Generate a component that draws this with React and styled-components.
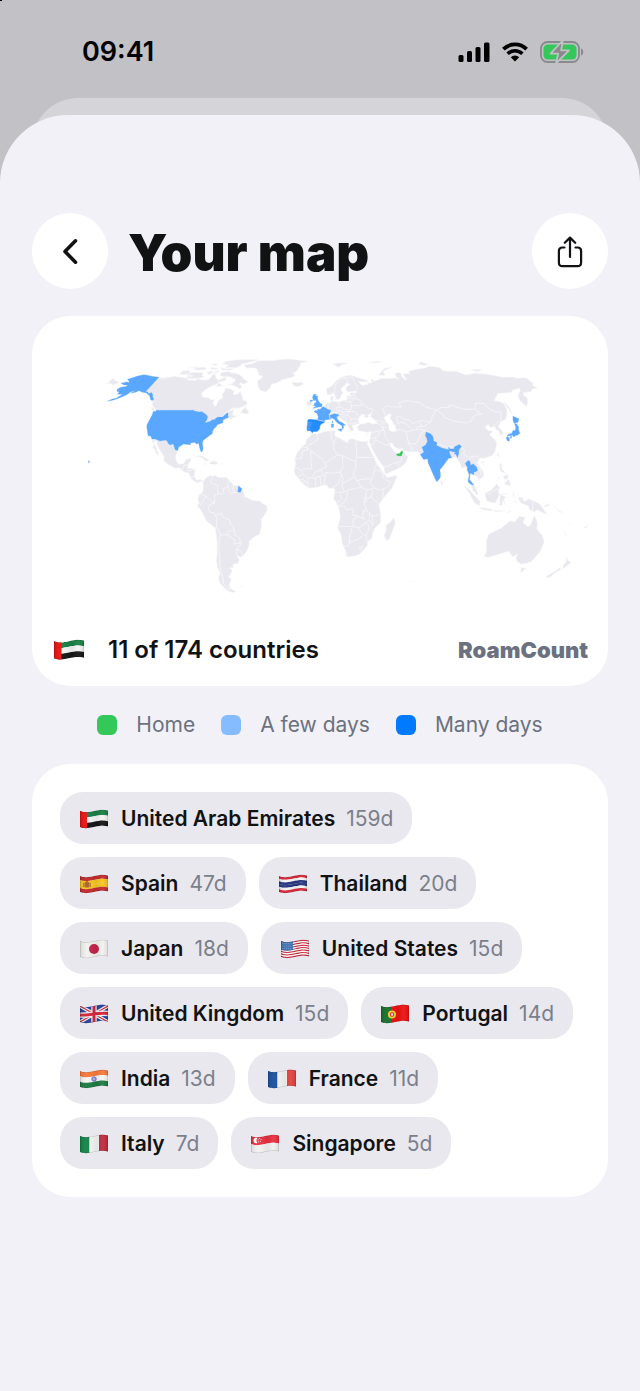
import React, { useId } from "react";

import styled, { createGlobalStyle } from "styled-components";

const GlobalStyle = createGlobalStyle`
  * {
    box-sizing: border-box;
  }

  body {
    margin: 0;
    background: #f2f1f7;
    font-family: Inter, "Liberation Sans", sans-serif;
    color: #111214;
  }
`;

const Screen = styled.div`
  min-height: 100vh;
  display: flex;
  flex-direction: column;
  background: linear-gradient(#000, #000) 0 0 / 2px 1px no-repeat, #c2c1c6;
`;

const StatusBar = styled.div`
  display: flex;
  align-items: center;
  justify-content: space-between;
  height: 98px;
  padding: 6px 56px 0 82px;
`;

const Time = styled.time`
  font-size: 27px;
  line-height: 32px;
  font-weight: 600;
  color: #000;
`;

const StatusIcons = styled.div`
  display: flex;
  align-items: center;
  gap: 12px;

  svg {
    display: block;
  }
`;

const BackSheet = styled.div`
  height: 90px;
  margin: 0 32px -73px;
  border-radius: 46px 46px 0 0;
  background: #d5d4d9;
`;

const Sheet = styled.main`
  flex: 1;
  padding: 98px 32px 40px;
  border-radius: 68px 68px 0 0;
  background: #f2f1f7;
`;

const Header = styled.header`
  display: flex;
  align-items: center;
  gap: 20px;
  margin-bottom: 27px;
`;

const Title = styled.h1`
  flex: 1;
  margin: 0;
  padding-top: 4px;
  font-size: 51px;
  line-height: 64px;
  font-weight: 900;
`;

const RoundButton = styled.button`
  width: 76px;
  height: 76px;
  padding: 0;
  border: 0;
  border-radius: 50%;
  background: #fff;
  color: #111214;

  svg {
    display: block;
  }
`;

const Card = styled.section`
  border-radius: 38px;
  background: #fff;
`;

const MapSvg = styled.svg`
  display: block;
  width: 100%;
  height: auto;
`;

const MapFooter = styled.div`
  display: flex;
  align-items: center;
  padding: 15px 20px 21px 22px;
`;

const Count = styled.strong`
  flex: 1;
  margin-left: 24px;
  font-size: 24px;
  line-height: 30px;
  font-weight: 600;
`;

const Brand = styled.span`
  font-size: 22px;
  line-height: 30px;
  font-weight: 900;
  color: #6b7180;
`;

const Legend = styled.ul`
  display: flex;
  justify-content: center;
  gap: 26px;
  margin: 24px 0;
  padding: 0;
  list-style: none;
`;

const LegendItem = styled.li`
  display: flex;
  align-items: center;
  gap: 19px;
  font-size: 21px;
  line-height: 30px;
  color: #6b7180;

  &::before {
    content: "";
    width: 20px;
    height: 20px;
    border-radius: 6px;
    background: ${({ $color }) => $color};
  }
`;

const Chips = styled.ul`
  display: flex;
  flex-wrap: wrap;
  gap: 13px;
  margin: 0;
  padding: 28px;
  list-style: none;
`;

const Chip = styled.li`
  display: flex;
  align-items: center;
  height: 52px;
  padding: 2px 19px 0 20px;
  border-radius: 23px;
  background: #e9e8ee;
  font-size: 21px;
  line-height: 30px;
`;

const ChipName = styled.span`
  margin: 0 11px 0 13px;
  font-weight: 600;
`;

const ChipDays = styled.span`
  color: #7b7f8c;
`;

const FlagSvg = styled.svg`
  display: block;
  flex: none;
`;

/* ---------- world map ---------- */

// Natural Earth projection
const RADIUS = 99.5;
const project = (lon, lat) => {
  const l = (lon * Math.PI) / 180;
  const p = (lat * Math.PI) / 180;
  const p2 = p * p;
  const p4 = p2 * p2;
  const x =
    l *
    (0.8707 -
      0.131979 * p2 +
      p4 * (-0.013791 + p4 * (0.003971 * p2 - 0.001529 * p4)));
  const y =
    p *
    (1.007226 +
      p2 * (0.015085 + p4 * (-0.044475 + 0.028874 * p2 - 0.005916 * p4)));
  return [(288 + x * RADIUS).toFixed(1), (180 - y * RADIUS).toFixed(1)];
};

const toLine = (points) =>
  "M" +
  points
    .trim()
    .split(/\s+/)
    .map((pair) => project(...pair.split(",").map(Number)).join(" "))
    .join("L");

const toShape = (list) => list.map((points) => toLine(points) + "Z").join("");

const LAND = [
  // Canada
  "-141,69.6 -137,69 -135,69.4 -131,69.9 -128,70.4 -124.5,70 -120,69.4 -115,68.8 -113.5,67.7 -109,67.9 -108,67.2 -106,68.7 -102,67.8 -98,67.7 -96,68.3 -95.5,69.8 -96,71.5 -94,72 -92,70.5 -90.5,69 -88.5,68.5 -87.5,67.3 -85.5,69 -82,69.5 -81.3,68.3 -82,67.2 -86,66.3 -87.3,64.8 -90.5,63.5 -93,62 -94.7,60 -94.8,59 -92.7,57 -88,56.5 -85,55.3 -82.3,55.1 -82.2,53 -80,51.3 -79,52 -79.3,54.5 -76.6,56.6 -78.5,58.8 -77.3,60 -78,62.4 -74,62.3 -71.5,61.2 -69.6,61 -69.7,58.9 -67.8,58.3 -66,58.8 -64.5,60.3 -61.5,57.2 -60,55 -57.3,54.6 -55.7,52.6 -58.5,51.2 -61,50.2 -66.5,50.2 -69,48.4 -71,46.9 -68.5,48.5 -65,49.2 -64.3,48.5 -65.2,47.2 -64.5,46.2 -61,45.5 -63.5,44.6 -65.8,43.5 -66,44.5 -67,45 -67.8,45.8 -68.3,47.3 -69.2,47.4 -70.3,46.2 -71.5,45 -75,45 -76.4,44.1 -76.8,43.6 -79.1,43.4 -79,42.7 -82.5,41.7 -83.1,42.1 -82.4,43 -82.5,45.3 -83.5,46 -84.3,46.4 -84.8,46.8 -88.4,48.3 -89.6,48 -92,48.3 -94.6,48.7 -95.2,49.4 -95.2,49 -123,49 -125.5,50.5 -127.5,51.5 -129,53 -130.2,54.8 -130,55.9 -131.8,56.6 -133.5,58.4 -135.5,59.7 -137.5,58.9 -139,60 -141,60.3",
  "-123.5,48.4 -125.5,48.8 -128.2,50.7 -125.5,50.2",
  "-59.2,47.7 -56,46.9 -53,46.8 -53.5,48.5 -55.8,49.8 -56.5,51.4 -58,49.5",
  "-66,62 -68.5,63 -72,64 -74.5,64.6 -78,64.5 -74,65.5 -73,67 -73,68.2 -79,70 -84.5,70 -88.5,70.8 -89.5,72.5 -86,73.7 -82,73.7 -80.5,72.6 -77,72.7 -72,71.5 -68.5,70.2 -67,69 -62,67 -61.5,66.5 -64,65 -67.5,66 -68,65 -65,64 -65,62.7",
  "-105,69 -113.5,68.6 -116.5,69.3 -117,70.2 -112,70.5 -118,71 -119,71.7 -115,73.2 -108,73 -105,72.5 -104.5,71 -101.5,69.7",
  "-125.5,72 -123,71.3 -120,71.6 -117,73 -121,74.5 -125,73.9",
  "-99,71.5 -102,72.5 -100,73.8 -97,73.8 -97,72.5",
  "-93,72.8 -95.5,72.3 -95.5,74 -91,74",
  "-80,74.6 -90,74.6 -93,76.5 -89.5,75.8 -80,75.7",
  "-105.5,75.2 -112,74.5 -117.5,75.2 -115.5,76.4 -109,76.8 -106,76",
  "-123,76 -117,77.4 -116,76.6",
  "-94,74.8 -98,75 -102.5,75.6 -101.5,76.6 -95,75.8",
  "-78,76.3 -89,76.4 -87.5,78 -92,79 -95,81 -91,81.9 -83,82.8 -70,83.1 -62,82.5 -68,81 -72,79.8 -76,79 -75,78.4",
  "-88,78.3 -94,79 -94,80.8 -90,81.2 -87,79.8",
  "-98,78 -104,78.5 -104,79.3 -99,79",
  "-80.5,63.8 -87,63.6 -85.5,65.8 -84,65.2",
  // Greenland, Iceland
  "-73,78.3 -68.5,76 -62,76.2 -58.5,75.3 -55.5,72.5 -54.5,71 -51,70.5 -51,69 -53.5,67.5 -52.5,65 -51,63 -48.5,61 -43.5,60 -41,62.7 -40.5,65 -36,66 -32,68 -25,69.5 -22,70.5 -24.5,72.5 -21,74 -20,76.3 -18.5,78 -19,80 -12,81.5 -20,82.2 -31.5,83.5 -40,83.2 -46,82 -54,82.2 -61,81.8 -65,80.5 -65.5,79.5",
  "-24,65.5 -22.5,66.4 -20,66 -16,66.5 -14,65.2 -15,64.3 -18.7,63.4 -22.6,63.9 -22,65",
  // Mexico and Central America
  "-117.1,32.5 -114.8,32.5 -111,31.3 -108.2,31.8 -106.5,31.7 -104.5,29.6 -103,29 -101.4,29.8 -100.3,28.3 -99.1,26.4 -97.2,25.9 -97.8,22.5 -97,20.3 -95.8,18.8 -94.4,18.1 -91.5,18.7 -90.4,20.9 -87.1,21.5 -87.5,19.5 -88.3,18.3 -88.9,15.9 -86,15.9 -83.2,15 -83.6,12.5 -83.5,10.8 -82,9 -79.8,9.5 -77.3,8.6 -77.5,7.5 -78.3,8.3 -80.3,8.3 -80.4,7.3 -82.9,8.2 -85.7,10 -87.6,13 -91.5,14 -94,16.1 -96.5,15.7 -102,18 -105.5,20.2 -105.6,22.5 -109,25.6 -112.2,29 -113.1,31.2 -114.8,31.8 -114.6,30 -112,27 -110,24.2 -109.5,23 -112,24.7 -112.3,26 -115,27.8 -114.3,29 -116.2,31",
  "-84.9,21.9 -82.5,23.1 -80,23 -77,21.5 -74.3,20.2 -77.7,19.9 -78.5,21.2 -82,22.5",
  "-74.4,18.5 -73,19.9 -70,19.8 -68.4,18.6 -71.5,17.8",
  "-78.3,18.4 -76.3,18.2 -77,17.8",
  "-67.2,18.4 -65.7,18.4 -66,17.9 -67.2,17.9",
  // South America
  "-77.3,8.6 -75.5,10.7 -72,12 -71.5,10.8 -70,12 -68,10.7 -62,10.7 -60,8.6 -57,6 -54,5.8 -51.6,4.2 -50,1 -50,-0.5 -48,-1 -44.5,-2.5 -40,-2.9 -37,-4.9 -35.2,-5.5 -34.9,-8 -37,-11 -39,-13 -39.2,-17.5 -41,-22 -44.5,-23.2 -48.5,-25.8 -48.7,-28.3 -50.5,-31 -53.5,-33.9 -56,-34.8 -58.3,-34 -57,-36 -58,-38.2 -62,-38.9 -62.3,-40.7 -65,-41 -63.8,-42.6 -65.3,-44.5 -67.5,-46.2 -65.8,-47.5 -69,-50.8 -68.3,-52.3 -70.8,-53.8 -73,-53 -75.5,-50 -75.5,-47 -73,-44 -73.7,-40 -73.5,-37 -71.5,-32 -70.3,-25 -70.3,-18.4 -76,-14 -79,-8 -81.2,-6 -80.3,-3.5 -81,-2.2 -80,0.5 -77.5,2.5 -77.2,4.5 -77.5,7.5",
  "-68.6,-52.7 -67.5,-54 -65.2,-54.7 -68,-55.6 -71,-54.8 -74.5,-52.9 -70.5,-53.7",
  "-61,-51.9 -58,-51.5 -58.5,-52.1",
  "68.7,-48.8 70.5,-49.3 69,-49.6",
  // Africa
  "-5.9,35.8 -2,35.2 3,36.8 10,37.3 11,37 10.3,34.3 15,32.3 19,30.3 20,32.5 23,32.6 29,31 34,31.2 32.5,30 34,27 35.6,24 37.2,20.5 38.5,18 43,12.5 44.5,10.5 51,11.8 51,10.4 47.8,4.5 42,-1.2 39,-5 40.5,-10.5 40.6,-15.2 36.5,-18.8 35.5,-22 35.5,-24 32.7,-26 32.4,-28.5 28,-33 25,-34 20,-34.8 18.3,-34 18.2,-32 15,-26.5 14.4,-22.5 11.8,-18 13.5,-12 12.2,-6 9,-1.5 9.5,0.8 9.7,4 8.5,4.6 6,4.3 4.3,6.3 1,5.9 -2,4.8 -7.6,4.4 -12,7.5 -15,11 -16.8,12.4 -17.4,14.7 -16.3,19 -17,21 -16,24 -13,27.7 -9.8,29.8 -9.7,32 -6.8,34",
  "49.3,-12 50.4,-15.7 47.2,-24.8 45.2,-25.5 43.4,-22.5 44.4,-20 44.3,-16.5 47,-15.2",
  // Eurasia
  "-9,37 -9.4,38.8 -8.9,41 -9,43 -8,43.7 -1.9,43.4 -1.2,45 -2.2,47.2 -4.6,48.2 -3,48.8 -1.6,48.7 -1.8,49.7 0,49.5 1.6,50.6 3.4,51.4 4.7,53 7,53.5 8.6,53.8 8.2,55.6 8.2,57 10.5,57.7 10.5,56.4 10,55 11,54.1 14,54 18.5,54.8 21,55.3 21.2,57 21.6,57.6 22.7,57.7 24.2,57.1 23.6,58.8 25,59.6 28,59.6 30,60 28,60.5 23,59.9 21.4,61 21.5,63 25.3,65 22.2,65.8 21,64.5 17.5,62.3 17.2,60.7 18.8,60 16.5,57.5 16,56.2 14.3,55.5 12.9,55.5 11.2,58.9 10.4,59.4 8,58.1 5.7,58.6 5,61.9 10,64 14,67.5 19,69.8 25.8,71 31,70.3 31,69.7 33,69.4 41,67.5 40.5,66.5 35,66.5 33,66.7 34.8,64.5 37,64 37.2,65 40,64.7 40,65.8 44,66 44,68.4 46,68 46,66.9 53,68.8 61,69 65,69.2 67,68.8 68.5,68.3 66.8,70 67,72 70,73 72.6,72.8 72,70 73.5,68 75,68 74,70.5 75,72.2 80.5,72.3 80.5,73.6 87,75 98,76.2 104,77.7 112,76.5 113,74 124,73.8 129,71.5 133,71.7 140,72.5 150,71.6 160,69.7 170,69.8 171,69 178,69.3 180,69 180,65 177.5,64.5 179,62.5 174,61.8 170,60 164,59.8 162,58 163,56.2 160,53.2 156.7,51 155.7,55 157,57.8 163,61 164,62.5 160,61.7 156.5,61.2 154.5,59.6 148,59.4 142.5,59 135.3,54.7 139.5,54.2 141.4,53 140.5,49 138,46 135,43.5 130.8,42.3 129.7,41 127.5,39.7 129.3,37 129,35.2 126.5,34.5 126.3,37 125,38 125.2,39.5 121.5,39 121,40.8 118,39.2 119,37.3 122.4,37 119.2,34.9 121.9,31.8 122,29.8 119.5,25.5 116.5,23 111,21.4 108,21.6 105.8,19 109.2,13.5 109,11.5 105,8.7 105,10.3 102.6,12.1 100.9,12.7 100.5,13.5 99.9,12 99.3,9.4 100.3,8.2 103.4,4.5 104.2,1.4 103.4,1.3 101,3.2 100.3,6 98.3,8 98.7,12 97.6,16.5 95,15.8 94,18.9 91.8,22.4 89,21.8 87,21.5 85,19.7 82,16.7 80.1,15 80.2,13 79.9,10.4 77.5,8.1 76,11 74.5,14.5 72.8,19 72.7,21.3 70,20.9 69,22.3 68.2,23.7 66.5,25.4 61.5,25.1 57.3,25.7 56.5,27 54,26.6 51,28 50,30 48,30 48.5,28.2 50.2,26.5 50.8,24.9 51.5,25.9 51.6,24.2 54,24.1 56.3,26.2 56.6,24.5 59.8,22.5 57.7,19 55,17 52,15.6 45,12.8 43.4,12.7 42.6,16.5 39,21 35,28 34.9,29.5 34.2,31.2 36,35.5 36,36.8 32.5,36.1 30.6,36.8 27.5,37 26.3,39.3 29,41 31.5,41.2 35,42 38,41 41.5,41.5 39,44 37,45.3 38.5,47 35,46.2 36,45.2 33.5,44.5 32.6,45.4 33.5,46.1 31,46.6 28.8,45 27.8,43.2 28.5,41.3 26,40.8 24,40.5 22.9,40.3 23.5,39 24,37.8 22.8,36.5 21.3,37.5 19.4,40.5 19.5,41.8 15.3,44.2 13.7,45.4 12.3,45.3 12.5,44 14,42.5 16,41.9 18.5,40.2 17,40.5 16.6,39.8 17,39 16,38 15.7,40 12.3,41.8 10.2,43.9 8.7,44.4 7.4,43.7 4,43.5 3.1,43 3.2,41.9 0.8,41 -0.3,39.4 0,38.7 -0.8,37.7 -2,36.8 -4.5,36.7 -5.6,36 -6.5,37",
  "-180,69 -175,67.3 -170,66 -173,64.3 -178,65.8 -180,65",
  "-6.1,52.2 -6.2,54 -8,54.4 -10,54.2 -10,51.7",
  "11,55.3 12.5,56 12,55",
  "52,71 55,73 60,76 68,76.8 58,74 57.5,70.7",
  "12,79.5 17,76.7 21,78.5 27,80 20,80",
  "95,79 100,81 105,79 100,78",
  "138,75 150,75.2 143,73.5",
  "48,80.5 58,81.6 62,80.8 54,80.2",
  "142,46 143.5,49.5 143,54.2 142,53 142,49",
  "32.4,35 34.4,35.6 33.2,34.6",
  "23.6,35.4 26.2,35.2 24,35",
  "120.2,23 121.5,25.2 121.8,24.8 121,22",
  "108.7,19.3 110.8,20 109.6,18.3",
  "79.9,9.5 81.7,7 80.2,6.1",
  "120.3,16 120.7,18.5 122.2,18.3 121.7,15.5 124,12.7 120.6,14",
  "122,11.5 125,12.3 125.2,10.3 122.8,9.2",
  "122,7 125.5,9.7 126.3,7 125.4,5.7",
  "117.3,8.5 119.4,11.3 119,10.2",
  // Indonesia, New Guinea
  "109,1.5 111.5,2.5 113,3.2 115.5,5.5 117,7 119,5.2 117.8,2 119,1 116,-4 114.5,-4 110.2,-2.8",
  "95.3,5.6 98,4.3 100.5,2 103.5,-0.8 106,-3.2 105.8,-5.8 102.2,-4 98.7,1.7",
  "105.2,-6.6 108.5,-6.7 114.4,-7.7 114,-8.6 108,-7.8",
  "119,-5.5 119,0 120.5,1.2 125,1.6 120.2,0.5 123.3,-0.9 121.5,-1.9 123,-5 121,-2.8 120.4,-5.6",
  "115,-8.2 119,-8.3 122.8,-8.3 119,-9 116,-9",
  "123.6,-10.3 127,-8.4 125,-8.8",
  "127.5,2 128.6,1 128,-0.8",
  "128,-3.2 130.7,-3.2 130,-3.7",
  "131,-0.8 134,-0.9 135,-3.3 138,-1.8 141,-2.6 145.5,-4.5 147.5,-6.5 150.7,-10.5 147,-9.3 144,-7.7 142.5,-9.2 139,-8 138,-5.8 133,-4 132,-2.8",
  "148.5,-5.8 152,-4.2 151.5,-5.6 149.5,-6.3",
  "155,-5.5 157,-7.5 160.5,-9 161,-9.8 158,-8.5",
  "164,-20.2 167,-22.3 166.3,-22.3",
  "166.8,-15 167.5,-16.4 166.8,-16",
  "177.3,-18 179.8,-16.4 178.4,-18.5",
  // Australia, New Zealand
  "114,-22 113.5,-26 115.7,-31.8 115,-34.3 118,-35 124,-33.5 131,-31.5 135.5,-34.8 137.8,-33 137.5,-35 140,-37.5 143.5,-38.8 147,-38.5 150,-37.3 153,-31.5 153.2,-26 150.5,-22.5 146,-19 145.3,-15 142.5,-10.8 141,-16.5 139.5,-17.5 135.7,-15 136.8,-12.2 132.5,-11.4 130,-14.8 127,-14 122.3,-18",
  "144.8,-40.8 148.2,-41 147,-43.5 146,-43.4",
  "172.8,-34.5 175.5,-36.8 178.4,-37.8 176.9,-39.8 175.2,-41.6 173.8,-39.3 174.6,-37.5",
  "172.8,-40.6 174.2,-41.8 171,-44.5 170.7,-45.8 168.5,-46.6 166.6,-45.9 171,-42.7",
];

const CASPIAN =
  "47,44.7 51,46.9 53,46.5 51,44.5 52.8,42 52.5,41.5 54,40 54,37 51,36.8 49,37.6 49.5,40.3 47.8,42.8";

const BORDERS = [
  // South America
  "-71.3,11.8 -72.5,9 -72,7.2 -67.5,6.2 -67.8,3 -67,1.2 -69.5,0.5 -69.5,-1 -70,-4.2",
  "-78.8,1.4 -75.4,-0.1 -72.5,-2.4 -70,-4.2 -73.2,-5 -74,-7.5 -72.5,-9.5 -70.6,-9.5 -69.5,-11 -68.8,-13 -69.3,-15.5 -69.5,-17.5 -70.3,-18.4",
  "-80.3,-3.5 -79,-5 -75.4,-0.1",
  "-69.5,-11 -65.3,-9.8 -65,-12 -60.2,-13.8 -60,-16.3 -58,-17.5 -57.8,-20 -59,-19.3 -62,-20.5 -62.7,-22.2 -66,-22 -67.5,-22.8",
  "-69.5,-17.5 -68,-20 -67.5,-22.8 -68.5,-25 -70,-30 -70,-34 -71.3,-38 -72,-43 -72,-48 -73,-50 -72,-52 -68.4,-52.3",
  "-62.7,-22.2 -58,-25 -58.6,-27.3 -54.7,-27 -54.3,-24.1 -57.8,-22 -57.8,-20",
  "-54.3,-25.6 -53.7,-27 -57.6,-30.2 -58.3,-34",
  "-57.6,-30.2 -55,-31.3 -53.5,-33.7",
  "-67,1.2 -65,1 -63.5,2.3 -64.5,4 -60.8,5.2 -61.3,6 -60,8.3",
  "-60.8,5.2 -59.8,3 -59,1.3 -56.5,1.9 -54.5,2.4",
  "-57,6 -58,4 -56.5,1.9",
  // Central America
  "-92.2,14.5 -91,17.8 -89,17.8 -88.3,18.3",
  "-89.3,14.4 -83.2,15",
  "-85.7,11 -83.7,11",
  // Africa
  "-2,35.2 -1.3,32.3 -5,30 -8.7,28.8 -8.7,27.4 -4.8,25 1.2,21.2 3.2,19 4.2,19.1 12,23.5 15,23 24,19.5",
  "-13,27.7 -8.7,27.7 -8.7,26 -12,26 -12,23.4 -13,21.3 -17,21.3",
  "-4.8,25 -6.5,25 -5.5,15.5 -11.5,15.5",
  "12,23.5 9.5,26.5 9.5,30.3 11.5,33.1",
  "8.3,36.9 7.6,33.5 9.5,30.3",
  "25,31.6 25,22 37,22",
  "25,22 24,20 24,15.7 22,13 22.9,11 27.4,5.1",
  "15,23 15.5,17 13.5,13.7 7,13 4,13.5 3.6,11.7 2.7,6.4",
  "3.2,19 4.2,16.5 0.3,15 -3,13.7 -5.5,10.5 -8,10.2 -8.3,7.5 -7.6,4.4",
  "0.3,15 2.2,12 3.6,11.7",
  "-5.5,10.5 -2.8,9.7 -2.8,11 0,11 2.2,12",
  "-2.8,9.7 -3,5.1",
  "0,11 0.5,7 1.2,6",
  "-8.3,7.5 -10.3,8.5 -11.5,7",
  "-10.3,8.5 -11,10 -13.2,9",
  "-8,10.2 -11.4,12.4 -15,10.9",
  "-11.4,12.4 -12.2,14.8 -16.4,16.2",
  "13.5,13.7 14,11 11.5,6.5 8.5,4.7",
  "14.1,13 15.5,10 14.5,6 16.1,2.2 9.7,2.2",
  "15.5,7.5 18.8,8.9 22.9,11",
  "12.2,-5.8 16,-3.5 17.7,-0.6 18.6,3.5 22.5,4.1 27.4,5.1 31,3.5 34,4.2 36,4.5 39.5,3.5 42,4.2 41.5,-1.6",
  "18.6,3.5 16.1,2.2",
  "13.2,2.2 14.3,-1.8 11.2,-3.9",
  "24,8.7 28,9.5 33,10 34,8.5 33,7.8 36,4.5",
  "34,8.5 36.2,14.3 37,17 38.5,18",
  "36.5,14.3 40,14.5 42.4,12.5 41.8,11 43.2,9.5 47,8 45,5 42,4.2",
  "34,4.2 35,1.9 33.9,0 34,-1 39.2,-4.7",
  "31,3.5 29.6,-1.3 29.2,-3.3 30.8,-8.3 33,-9.5 34.5,-11.5 40.5,-10.5",
  "34,-1 30.5,-1.1 29.6,-1.3",
  "30.5,-1.1 30.8,-2.4 29.4,-4.4",
  "34.5,-11.5 35.8,-15 35.2,-17 34.2,-14.5 33,-14 32.8,-12.5 33.2,-9.6",
  "33,-14 30.3,-15.2 28.9,-16 27,-17.9 25.2,-17.8 23.4,-17.6 11.8,-17.3",
  "30.8,-8.3 28.6,-8.5 28.5,-12 29.8,-13.4 24,-11 24,-13 22,-13 22,-16.2 23.4,-17.6",
  "12.3,-6 16.5,-5.9 17.5,-8.1 21.8,-7.3 22,-11 24,-11",
  "30.3,-15.6 32.9,-16.7 32.8,-19.5 31.3,-22.3 32,-26 32.8,-26.8",
  "25.2,-17.8 27.7,-20.5 29.4,-22.1 31.3,-22.3",
  "29.4,-22.1 26.5,-24.5 23,-25.4 20.7,-26.8 20,-24.8 20,-22 21,-22 21,-18.3",
  "20,-24.8 20,-28.4 16.5,-28.6",
  "27,-29.6 28.6,-28.7 29.3,-29.7 28,-30.6 27,-29.6",
  // Asia
  "48,46 47,50 51,51.5 55,51 61.5,50.8 61,53.5 69,55.2 71,54.2 77,53.5 80,51 87.3,49.2 92,50.7 98,50.5 98.5,52 102,51.4 107,49.8 113,49.5 116.7,49.8 120,53.3 126,53 127.5,50 131,47.7 135,48.4 133,45 131,42.8",
  "87.8,49 91,46.5 91,45 96.5,42.8 105,41.6 110,42.7 112,45 116,46.5 119.8,46.8 116.7,49.8",
  "87.3,49.2 82.5,45.3 80.3,42.2 74,43 71,42.5 67,41.2 66,43 62,43.5 58.5,45.5 56,45 56,41.3 60,42.2 66.5,37.5",
  "80.3,42.2 74,39.5 73,40 71,42.5",
  "74,39.5 69.5,39.5 68,38",
  "54,37.3 57,38.2 61,36.5 66.5,37.5 71,38.2 74.8,37.3",
  "61,36.5 61,31.3 61.8,31 60.9,29.8 63.2,27.2 61.6,25.2",
  "60.9,29.8 66.3,29.8 69.5,33 71.3,36 74.8,37.3 78,35.5",
  "81,30.3 84,28.8 88,27.9 92,27.8",
  "97.3,28.2 98.7,25.8 97.6,24 101.2,21.5 102.2,22.4 106.7,22.8 108,21.6",
  "101.2,21.5 100.1,20.4",
  "102.2,22.4 104,20.4 105.2,18.5 107.5,15 107.5,12.3 104.5,10.5",
  "105.2,14.3 107.5,14.5",
  "124.4,40 128,42 130.7,42.3",
  "126.7,37.8 128.4,38.6",
  "44.8,39.6 46,36 45.5,34 48,30",
  "36,36 42.3,37.2 44.8,37.2 44,40 41.5,41.5",
  "42.3,37.2 41,34.4 38.8,33.4 35.7,32.7",
  "38.8,33.4 39,32 44.7,29.2 47.5,29",
  "39,32 37,31.5 38,30.5 36,29.3 35,29.4",
  "42.8,16.5 46,17.2 49,18.6 52,19 53,16.7",
  "52,19 55,20 55.2,22.7",
  "40,43.4 44,42.6 48.5,41.8",
  "44,41.2 46.5,41",
  "44.8,39.6 48,38.8",
  "141,-2.6 141,-9",
  "109.6,2 112,1.2 115,3 117.8,4.2",
  // Europe
  "7,46 7.6,47.6 8.2,49 6.2,49.5 2.5,51",
  "6.2,49.5 6,51.8 7,53.3",
  "8.6,54.9 10,54.8",
  "7.6,47.6 13,47.6 13.8,48.7 12.1,50.3 15,51 14.3,53.9",
  "15,51 18.8,49.5 22.5,49.1 24,50.7 23.5,54 19.5,54.4",
  "13.8,48.7 17,48.5 16,46.8 13.7,46.5",
  "17,48 22.2,48.4 20.3,46.1 16.5,46.5",
  "22.5,48.2 26.6,48.2 28.2,45.5",
  "23.6,51.6 31.5,52 34,52 35.5,50.4 40,49.6 38.2,47.1",
  "31.5,52.2 32.5,53.5 31,55 28.2,56.2 27.5,57.5 27.5,59.4",
  "28.2,56.2 21,56.2",
  "27,57.8 24.4,58",
  "26.5,55.6 23.5,54",
  "28,60.5 31.5,62.9 29,67 28.8,69.5",
  "24,65.8 23.7,68 20.5,69",
  "11.2,59 12.3,61.5 12.2,63.5 14.5,66.3 16.5,68 20.5,69 25.7,69.6 28.8,69.8",
  "22.7,44.2 28.5,43.8",
  "20.3,46.1 21.5,45 22.7,44 22.4,42.3",
  "16,45.2 19,44.9 19.3,43",
  "20,39.7 21,40.9 26.3,41.7 28,42",
  "20.6,42 21,40.9",
];

const FEW = "#5aa7ff";
const MANY = "#258cff";

const VISITED = [
  {
    name: "United States",
    color: FEW,
    shapes: [
      "-141,69.6 -141,60.3 -139,60 -137.5,58.9 -135.5,59.7 -133.5,58.4 -131.8,56.6 -130,55.9 -130.5,54.8 -132,55.2 -133.5,56.3 -135,57.5 -136.6,58.2 -139.7,59.5 -143.9,60 -147,60.9 -148.5,60 -151.8,59.2 -150.5,61.2 -153,60 -154,58.5 -157,56.8 -160.5,55.3 -164.9,54.4 -162.5,55.7 -160,56.2 -157.6,58.7 -160,58.6 -162,58.7 -162,60 -164.5,60.5 -166,61.7 -164.8,63 -161,63.6 -161,64.5 -164,64.5 -168,65.6 -164.5,66.5 -162,66.2 -163.5,67.1 -166.5,68.3 -163,69.4 -161.5,70.3 -156.6,71.3 -152,70.8 -147,70.2",
      "-123,49 -95.2,49 -95.2,49.4 -94.6,48.7 -92,48.3 -89.6,48 -88.4,48.3 -84.8,46.8 -84.3,46.4 -83.5,46 -82.5,45.3 -82.4,43 -83.1,42.1 -82.5,41.7 -79,42.7 -79.1,43.4 -76.8,43.6 -76.4,44.1 -75,45 -71.5,45 -70.3,46.2 -69.2,47.4 -68.3,47.3 -67.8,45.8 -67,44.8 -70,43.8 -70.7,42.7 -70,41.7 -72,41.2 -74,40.6 -74.2,39.5 -75.5,38.5 -76,37 -75.8,35.5 -77.5,34.4 -79.2,33.2 -81.2,31.7 -81.3,30 -80.1,27 -80.4,25.2 -81.2,25.3 -82.7,27.8 -83.8,30 -85.3,29.7 -86.5,30.4 -89.3,30.3 -89.4,29.2 -91.5,29.4 -94,29.6 -97,27.9 -97.2,25.9 -99.1,26.4 -100.3,28.3 -101.4,29.8 -103,29 -104.5,29.6 -106.5,31.7 -108.2,31.8 -111,31.3 -114.8,32.5 -117.1,32.5 -118.4,34 -120.6,34.5 -122,36.7 -123.8,39.3 -124.3,40.4 -124.1,44 -124,46.2 -124.7,48.3 -122.8,48.2",
      "-156,20.2 -154.9,19.5 -155.7,18.9",
    ],
  },
  {
    name: "France",
    color: FEW,
    shapes: [
      "-1.9,43.4 -1.2,45 -2.2,47.2 -4.6,48.2 -3,48.8 -1.6,48.7 -1.8,49.7 0,49.5 1.6,50.8 2.5,51 6.2,49.5 8.2,49 7.6,47.6 6.2,46.3 7,45.9 7.4,43.7 4,43.5 3.1,42.5",
      "8.6,42 9.4,43 9.3,41.4",
      "-54,5.8 -51.7,4.1 -52.7,2.2 -54.5,2.4 -54,4",
    ],
  },
  {
    name: "Spain",
    color: MANY,
    shapes: [
      "-8.9,41.8 -9,43 -8,43.7 -1.9,43.4 3.1,42.5 3.2,41.9 0.8,41 -0.3,39.4 0,38.7 -0.8,37.7 -2,36.8 -4.5,36.7 -5.6,36 -6.5,37 -7.4,37.2 -7,39.7 -6.3,41.8",
    ],
  },
  {
    name: "Portugal",
    color: "#409aff",
    shapes: ["-9,37 -9.4,38.8 -8.9,41.8 -6.3,41.8 -7,39.7 -7.4,37.2"],
  },
  {
    name: "United Kingdom",
    color: FEW,
    shapes: [
      "-5.5,50.1 -3,50.6 1.3,51.1 1.7,52.7 0.2,53 -1.5,55 -2,56 -2,57.7 -4,57.6 -3,58.6 -5,58.6 -6,56.7 -5,54.8 -3,54.9 -3,53.4 -4.5,53.3 -4.3,52.5 -5.2,51.8 -3,51.5",
      "-5.6,54.5 -7.5,54.2 -8,54.6 -7,55.2 -6,55.2",
    ],
  },
  {
    name: "Italy",
    color: FEW,
    shapes: [
      "7.4,43.7 8.7,44.4 10.2,43.9 12.3,41.8 15.7,40 16,38 17,39 16.6,39.8 17,40.5 18.5,40.2 16,41.9 14,42.5 12.5,44 12.3,45.3 13.7,45.7 13.6,46.5 10.5,46.9 7,45.9",
      "12.5,38 15.6,38.2 15.1,36.7",
      "8.2,39 8.2,41 9.7,41 9.6,39.2",
    ],
  },
  {
    name: "India",
    color: FEW,
    shapes: [
      "68.2,23.7 70.9,25 70,27.8 72.8,29 74.5,31 74.5,32.8 73.9,34.3 75,36.5 77.8,35.5 79,34 78.8,31.3 81,30.3 80.1,28.8 84,27.2 88,26.4 88.2,27.9 89,26.8 92,26.9 92,27.8 96,29.4 97.3,28.2 95,26.5 94.2,24 93,22 92.3,24 91.2,24 92.4,25 89.9,25.3 88.5,26 88.1,24.5 89,21.8 87,21.5 85,19.7 82,16.7 80.1,15 80.2,13 79.9,10.4 77.5,8.1 76,11 74.5,14.5 72.8,19 72.7,21.3 70,20.9 69,22.3",
    ],
  },
  {
    name: "Thailand",
    color: FEW,
    shapes: [
      "100.5,13.5 100.9,12.7 102.6,12.1 102.5,13.6 105.2,14.4 104.8,16.5 103,18.3 101,17.6 101,19.5 100.1,20.4 97.7,18.6 98.8,16.2 98.4,15 99.2,13 99.5,11.8 98.7,10 98.3,8 100.2,6.6 102,6.3 100.3,8.2 99.3,9.4 99.9,12",
    ],
  },
  {
    name: "Japan",
    color: FEW,
    shapes: [
      "130.9,34 132.5,35.2 135,35.6 136.8,37.3 138.5,37.3 140,39.5 140.3,41.2 141.5,41.2 142,39.5 140.9,37.5 140.8,35.7 138.8,34.7 136.8,34.4 135.7,33.5 135,34.6",
      "129.8,33 131,33.8 132,33 131.3,31.3 130.2,31.3",
      "132.5,33.5 134.5,34.2 133.3,32.8",
      "140,41.5 140.4,43.2 142,45.5 145.3,44 143.2,42",
    ],
  },
  {
    name: "Singapore",
    color: FEW,
    shapes: ["103.6,1.3 104,1.4 103.9,1.2"],
  },
  {
    name: "United Arab Emirates",
    color: "#34c759",
    shapes: ["51.8,24 54,24.1 56.1,26 56.3,24.8 55.2,22.9 52.5,23"],
  },
];

const WorldMap = () => (
  <MapSvg viewBox="0 0 576 304" role="img" aria-label="Visited countries">
    <g stroke="#f8f8fa" strokeWidth="0.6" strokeLinejoin="round">
      <path d={toShape(LAND)} fill="#e9e8ee" />
      <path d={toShape([CASPIAN])} fill="#fff" />
      <path d={BORDERS.map(toLine).join("")} fill="none" strokeWidth="0.8" />
      {VISITED.map((country) => (
        <path
          key={country.name}
          d={toShape(country.shapes)}
          fill={country.color}
          stroke={country.color}
          strokeWidth="0.3"
        />
      ))}
      <path d={toLine("-1.9,43.4 3.1,42.5")} fill="none" />
      <path d={toLine("7,45.9 7.4,43.7")} fill="none" />
    </g>
  </MapSvg>
);

/* ---------- flags ---------- */

// wavy horizontal band between two heights
const band = (top, bottom) =>
  `M0 ${top}C5 ${top + 2} 9 ${top + 1} 14 ${top}S23 ${top - 2} 28 ${top - 0.5}` +
  `V${bottom - 0.5}C23 ${bottom - 2} 19 ${bottom - 1} 14 ${bottom}S5 ${bottom + 2} 0 ${bottom}Z`;

const stripes = (colors) => {
  const step = 16 / colors.length;
  return colors.map((color, i) => (
    <path key={i} d={band(2 + i * step, 2 + (i + 1) * step)} fill={color} />
  ));
};

const columns = (colors) =>
  colors.map(([color, x, width]) => (
    <rect key={x} x={x} width={width} height="20" fill={color} />
  ));

const FLAGS = {
  ae: (
    <>
      {stripes(["#168043", "#f4f4f4", "#151515"])}
      <rect width="7" height="20" fill="#ee1111" />
    </>
  ),
  es: (
    <>
      {stripes(["#c32a2c", "#f7c51e", "#f7c51e", "#c32a2c"])}
      <rect x="4.5" y="8" width="5" height="5.5" rx="1" fill="#b5642b" />
      <path d="M6 7.5h2M7 9v4M3.7 9v4M10.3 9v4" stroke="#8f5a2e" strokeWidth="0.8" />
    </>
  ),
  th: stripes(["#d8283a", "#f5f5f5", "#25357f", "#25357f", "#f5f5f5", "#d8283a"]),
  jp: (
    <>
      <rect width="28" height="20" fill="#f1f1ef" />
      <circle cx="14" cy="10" r="5" fill="#c5224a" />
    </>
  ),
  us: (
    <>
      {stripes([
        "#d52b3f", "#fff", "#d52b3f", "#fff", "#d52b3f", "#fff", "#d52b3f",
        "#fff", "#d52b3f", "#fff", "#d52b3f", "#fff", "#d52b3f",
      ])}
      <path d="M0 0H12V11C8 12 5 12 0 11Z" fill="#3f72b4" />
      <path
        d="M1.5 4.5H12M1.5 7H12M1.5 9.5H12"
        stroke="#c6d5e8"
        strokeWidth="0.6"
        strokeDasharray="0.6 1.4"
      />
    </>
  ),
  gb: (
    <>
      <rect width="28" height="20" fill="#27409b" />
      <path d="M0 2L28 18M0 18L28 2" stroke="#f3f3f3" strokeWidth="3.6" />
      <path d="M0 2L28 18M0 18L28 2" stroke="#d3243c" strokeWidth="1.2" />
      <path d="M14 0V20M0 11C6 12 20 8 28 9.5" stroke="#f3f3f3" strokeWidth="5.4" fill="none" />
      <path d="M14 0V20M0 11C6 12 20 8 28 9.5" stroke="#d3243c" strokeWidth="3" fill="none" />
    </>
  ),
  pt: (
    <>
      {columns([["#17702c", 0, 11], ["#ec1010", 11, 17]])}
      <circle cx="11" cy="10.5" r="4" fill="#f2d22e" />
      <rect x="9" y="8.2" width="4" height="4.6" rx="1.4" fill="#e33" />
      <rect x="10" y="9.2" width="2" height="2.6" rx="0.6" fill="#dfe7f5" />
    </>
  ),
  in: (
    <>
      {stripes(["#f8793a", "#f5f5f5", "#1d7a41"])}
      <circle cx="14" cy="10" r="2.2" fill="#a9b2e8" stroke="#3c46b4" strokeWidth="0.7" />
    </>
  ),
  fr: columns([["#1a529f", 0, 9.5], ["#f3f3f3", 9.5, 9.5], ["#e2423d", 19, 9]]),
  it: columns([["#148448", 0, 9.5], ["#f3f3f3", 9.5, 9.5], ["#bf2b3c", 19, 9]]),
  sg: (
    <>
      {stripes(["#e8303f", "#f1f1ef"])}
      <path d="M6.5 4A2.8 2.8 0 1 0 6.5 9A3.4 3.4 0 0 1 6.5 4Z" fill="#fff" />
      <path d="M8.4 4.4v.1M10 5.6v.1M7.2 5.8v.1M9.4 7.6v.1M7.6 7.8v.1" stroke="#fff" strokeWidth="0.9" strokeLinecap="round" />
    </>
  ),
};

const Flag = ({ code, size = 28 }) => {
  const id = useId();
  return (
    <FlagSvg width={size} height={(size * 5) / 7} viewBox="0 0 28 20" aria-hidden="true">
      <clipPath id={id}>
        <path d={band(2, 18)} />
      </clipPath>
      <linearGradient id={`${id}-shade`}>
        <stop offset="0" stopColor="#000" stopOpacity="0.12" />
        <stop offset="0.25" stopColor="#fff" stopOpacity="0.04" />
        <stop offset="0.6" stopColor="#000" stopOpacity="0.06" />
        <stop offset="0.8" stopColor="#fff" stopOpacity="0.06" />
        <stop offset="1" stopColor="#000" stopOpacity="0.1" />
      </linearGradient>
      <g clipPath={`url(#${id})`}>
        {FLAGS[code]}
        <path
          d={band(2, 18)}
          fill={`url(#${id}-shade)`}
          stroke="#000"
          strokeOpacity="0.25"
          strokeWidth="0.8"
        />
      </g>
    </FlagSvg>
  );
};

/* ---------- icons ---------- */

const SignalIcon = () => (
  <svg width="32" height="20" viewBox="0 0 32 20" aria-hidden="true">
    <rect x="0.5" y="13" width="5" height="7" rx="1.5" />
    <rect x="9" y="9" width="5" height="11" rx="1.5" />
    <rect x="17.5" y="5" width="5" height="15" rx="1.5" />
    <rect x="26" y="0.5" width="5.5" height="19.5" rx="1.5" />
  </svg>
);

const WifiIcon = () => (
  <svg width="26" height="20" viewBox="0 0 26 20" fill="none" stroke="#000" aria-hidden="true">
    <path d="M1.4 7.2A16.4 16.4 0 0 1 24.6 7.2" strokeWidth="3.8" />
    <path d="M5.6 11.8A10.5 10.5 0 0 1 20.4 11.8" strokeWidth="3.5" />
    <path d="M13 19.6L8.8 15.3A6 6 0 0 1 17.2 15.3Z" fill="#000" stroke="none" />
  </svg>
);

const BatteryIcon = () => (
  <svg width="44" height="22" viewBox="0 0 44 22" aria-hidden="true">
    <rect x="1" y="1" width="38" height="20" rx="6.5" fill="none" stroke="#8a898e" strokeWidth="1.8" />
    <path d="M41 7.5C44 8.5 44 13.5 41 14.5Z" fill="#8a898e" />
    <rect x="3.5" y="3.5" width="33" height="15" rx="4.2" fill="#34c759" />
    <path
      d="M22.8 -0.5L10.5 12.6H18.2L16 22.5L29 9.4H21.2Z"
      fill="#8a898e"
      stroke="#c2c1c6"
      strokeWidth="1.8"
      strokeLinejoin="round"
    />
  </svg>
);

const BackIcon = () => (
  <svg width="76" height="76" viewBox="0 0 76 76" fill="none" stroke="currentColor" aria-hidden="true">
    <path d="M43.5 27.8L33 38.5L43.5 49.2" strokeWidth="3.6" strokeLinecap="round" strokeLinejoin="round" />
  </svg>
);

const ShareIcon = () => (
  <svg width="76" height="76" viewBox="0 0 76 76" fill="none" stroke="currentColor" aria-hidden="true">
    <g strokeWidth="2.2" strokeLinecap="round" strokeLinejoin="round">
      <path d="M32.5 34.5H30.4Q26.9 34.5 26.9 38V49.5Q26.9 53.2 30.4 53.2H45.6Q49.1 53.2 49.1 49.5V38Q49.1 34.5 45.6 34.5H43.5" />
      <path d="M38 44V24.6M32.8 29.8L38 24.6L43.2 29.8" />
    </g>
  </svg>
);

const COUNTRIES = [
  ["ae", "United Arab Emirates", 159],
  ["es", "Spain", 47],
  ["th", "Thailand", 20],
  ["jp", "Japan", 18],
  ["us", "United States", 15],
  ["gb", "United Kingdom", 15],
  ["pt", "Portugal", 14],
  ["in", "India", 13],
  ["fr", "France", 11],
  ["it", "Italy", 7],
  ["sg", "Singapore", 5],
];

const App = () => {
  return (
    <Screen>
      <GlobalStyle />
      <StatusBar>
        <Time>09:41</Time>
        <StatusIcons>
          <SignalIcon />
          <WifiIcon />
          <BatteryIcon />
        </StatusIcons>
      </StatusBar>
      <BackSheet />
      <Sheet>
        <Header>
          <RoundButton type="button" aria-label="Back">
            <BackIcon />
          </RoundButton>
          <Title>Your map</Title>
          <RoundButton type="button" aria-label="Share">
            <ShareIcon />
          </RoundButton>
        </Header>
        <Card>
          <WorldMap />
          <MapFooter>
            <Flag code="ae" size={30} />
            <Count>11 of 174 countries</Count>
            <Brand>RoamCount</Brand>
          </MapFooter>
        </Card>
        <Legend>
          <LegendItem $color="#34c759">Home</LegendItem>
          <LegendItem $color="#85bbff">A few days</LegendItem>
          <LegendItem $color="#007aff">Many days</LegendItem>
        </Legend>
        <Card>
          <Chips>
            {COUNTRIES.map(([code, name, days]) => (
              <Chip key={code}>
                <Flag code={code} />
                <ChipName>{name}</ChipName>
                <ChipDays>{days}d</ChipDays>
              </Chip>
            ))}
          </Chips>
        </Card>
      </Sheet>
    </Screen>
  );
};

export default App;
